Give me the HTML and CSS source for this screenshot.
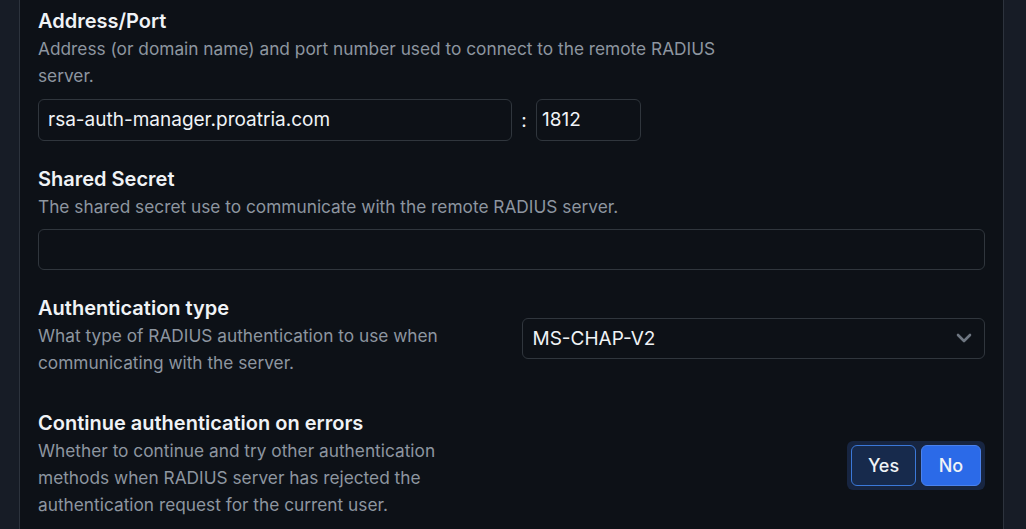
FILE: index.html
```html
<!DOCTYPE html>
<html>
<head>
<meta charset="utf-8">
<link rel="stylesheet" href="styles.css">
</head>
<body>
<div class="page">
  <div class="panel">
    <section class="field">
      <div class="label">Address/Port</div>
      <div class="desc wide">Address (or domain name) and port number used to connect to the remote RADIUS server.</div>
      <div class="addr-row">
        <div class="input addr">rsa-auth-manager.proatria.com</div>
        <span class="colon">:</span>
        <div class="input port">1812</div>
      </div>
    </section>
    <section class="field">
      <div class="label">Shared Secret</div>
      <div class="desc">The shared secret use to communicate with the remote RADIUS server.</div>
      <div class="input full"></div>
    </section>
    <section class="field split">
      <div class="text">
        <div class="label">Authentication type</div>
        <div class="desc">What type of RADIUS authentication to use when communicating with the server.</div>
      </div>
      <div class="select">
        <span>MS-CHAP-V2</span>
        <svg class="chev" width="16" height="10" viewBox="0 0 16 10"><path d="M2 2 L8 8 L14 2" fill="none" stroke="#6e7681" stroke-width="2.6" stroke-linecap="round" stroke-linejoin="round"/></svg>
      </div>
    </section>
    <section class="field split last">
      <div class="text">
        <div class="label">Continue authentication on errors</div>
        <div class="desc">Whether to continue and try other authentication methods when RADIUS server has rejected the authentication request for the current user.</div>
      </div>
      <div class="toggle-wrap">
        <div class="toggle">
          <button class="opt yes">Yes</button>
          <button class="opt no">No</button>
        </div>
      </div>
    </section>
  </div>
</div>
</body>
</html>
```
FILE: styles.css
```css
html, body {
  margin: 0;
  padding: 0;
  background: #171c26;
  height: 100%;
  overflow: hidden;
}
body {
  font-family: Inter, "Noto Sans", sans-serif;
}
.page {
  padding: 0 22px 0 19px;
  height: 100%;
}
.panel {
  background: #0d1117;
  border-left: 1px solid #2d333d;
  border-right: 1px solid #2d333d;
  padding: 7px 18px 0 18px;
  height: 100%;
  box-sizing: border-box;
}
.field {
  margin-bottom: 24px;
}
.label {
  color: #f0f3f6;
  font-size: 20px;
  font-weight: 600;
  line-height: 28px;
}
.desc {
  color: #8d96a0;
  font-size: 17.3px;
  line-height: 27px;
}
.desc.wide {
  max-width: 700px;
}
.text {
  padding-right: 30px;
}
.input {
  box-sizing: border-box;
  height: 42px;
  border: 1px solid #30363d;
  border-radius: 6px;
  background: #0d1117;
  color: #f0f3f6;
  font-size: 19px;
  line-height: 40px;
  padding: 0 9px;
  margin-top: 9px;
}
.addr-row {
  display: flex;
  align-items: center;
  margin-top: 10px;
}
.addr-row .input {
  margin-top: 0;
}
.addr {
  width: 474px;
}
.colon {
  color: #f0f3f6;
  font-size: 19px;
  width: 24px;
  text-align: center;
}
.port {
  width: 105px;
  padding-left: 5px;
}
.full {
  width: 100%;
  height: 41px;
}
.split {
  display: grid;
  grid-template-columns: 1fr 1fr;
  column-gap: 20px;
  align-items: center;
  margin-bottom: 33px;
}
.select {
  box-sizing: border-box;
  height: 41px;
  border: 1px solid #30363d;
  border-radius: 6px;
  display: flex;
  align-items: center;
  justify-content: space-between;
  padding: 0 12px 0 10px;
  color: #f0f3f6;
  font-size: 19px;
  margin-top: 6px;
}
.toggle-wrap {
  display: flex;
  justify-content: flex-end;
  margin-top: 4px;
}
.toggle {
  display: flex;
  gap: 5px;
  padding: 4px;
  background: #172541;
  border-radius: 6px;
}
.opt {
  font-family: Inter, "Noto Sans", sans-serif;
  font-size: 18px;
  font-weight: 500;
  color: #f0f3f6;
  height: 41px;
  border-radius: 6px;
  padding: 0;
  cursor: pointer;
}
.yes {
  width: 65px;
  background: #172a4c;
  border: 1px solid #3b78d8;
}
.no {
  width: 60px;
  background: #2b6ae8;
  border: 1px solid #4b82ec;
}
```
